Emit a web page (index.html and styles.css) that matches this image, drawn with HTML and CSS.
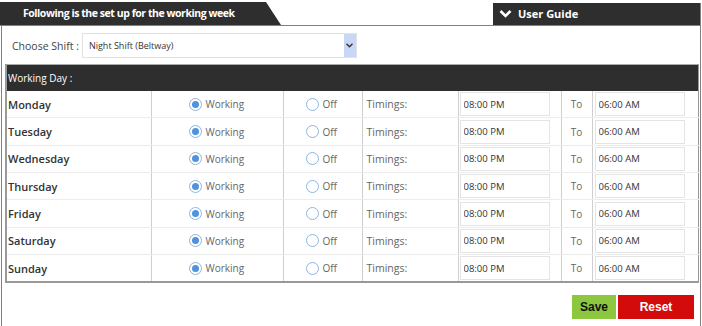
FILE: index.html
```html
<!DOCTYPE html>
<html lang="en">
<head>
    <meta charset="UTF-8">
    <meta name="viewport" content="width=device-width, initial-scale=1.0">
    <title>Working Week</title>
    <link rel="stylesheet" href="styles.css">
</head>
<body>

    <div class="tabs">
        <div class="tab-main">Following is the set up for the working week</div>
        <div class="tab-guide">
            <svg class="chevron" width="13" height="10" viewBox="0 0 13 10"><path d="M1.5 2 L6.5 7 L11.5 2" fill="none" stroke="#fff" stroke-width="2.6"/></svg>
            User Guide
        </div>
    </div>

    <div class="panel">
        <div class="shift-row">
            <label class="shift-label" for="shift">Choose Shift :</label>
            <div class="select-box">
                <span class="select-text">Night Shift (Beltway)</span>
                <span class="select-arrow">
                    <svg width="7" height="5" viewBox="0 0 7 5"><path d="M0.5 0.8 L3.5 3.8 L6.5 0.8" fill="none" stroke="#333" stroke-width="1.4"/></svg>
                </span>
            </div>
        </div>

        <table class="week">
            <colgroup>
                <col class="c-day">
                <col class="c-work">
                <col class="c-off">
                <col class="c-label">
                <col class="c-from">
                <col class="c-to">
                <col class="c-until">
            </colgroup>
            <tr class="head">
                <td colspan="7">Working Day :</td>
            </tr>
            <tbody id="days"></tbody>
        </table>

        <div class="actions">
            <button class="btn-save">Save</button>
            <button class="btn-reset">Reset</button>
        </div>
    </div>

    <script>
        const days = ["Monday", "Tuesday", "Wednesday", "Thursday", "Friday", "Saturday", "Sunday"];
        const body = document.getElementById("days");

        days.forEach(function (day) {
            const row = document.createElement("tr");
            row.innerHTML =
                '<td class="day">' + day + '</td>' +
                '<td class="opt-work"><label><input type="radio" name="' + day + '" checked> Working</label></td>' +
                '<td class="opt-off"><label><input type="radio" name="' + day + '"> Off</label></td>' +
                '<td class="label">Timings:</td>' +
                '<td class="time from"><input type="text" value="08:00 PM"></td>' +
                '<td class="to">To</td>' +
                '<td class="time"><input type="text" value="06:00 AM"></td>';
            body.appendChild(row);
        });
    </script>

</body>
</html>
```

FILE: styles.css
```css
body {
    margin: 0;
    font-family: "Open Sans", Arial, sans-serif;
    background: #fff;
    color: #333;
}
.tabs {
    display: flex;
    justify-content: space-between;
    width: 701px;
    height: 23px;
    margin-top: 2px;
    border-bottom: 1px solid #808080;
}
.tab-main {
    width: 281px;
    background: #2e2e2e;
    color: #fff;
    font-weight: 700;
    font-size: 10.5px;
    letter-spacing: -0.45px;
    white-space: nowrap;
    line-height: 23px;
    padding-left: 23px;
    box-sizing: border-box;
    clip-path: polygon(0 0, 266px 0, 281px 100%, 0 100%);
}
.tab-guide {
    width: 208px;
    margin-top: 1px;
    background: #2e2e2e;
    border-right: 1px solid #808080;
    color: #fff;
    font-weight: 700;
    font-size: 11px;
    line-height: 22px;
    padding-left: 6px;
    box-sizing: border-box;
    display: flex;
    align-items: center;
    gap: 6px;
}
.panel {
    width: 700px;
    height: 300px;
    margin-left: 1px;
    border-left: 1px solid #808080;
    border-right: 1px solid #808080;
    padding: 0 3px;
    box-sizing: border-box;
}
.shift-row {
    display: flex;
    align-items: center;
    padding: 7px 0 0 7px;
    height: 25px;
}
.shift-label {
    flex: none;
    font-size: 10.5px;
    color: #444;
    margin-right: 3px;
}
.select-box {
    display: flex;
    align-items: center;
    justify-content: space-between;
    width: 275px;
    height: 25px;
    border: 1px solid #e2e2e2;
    box-sizing: border-box;
    padding-left: 6px;
}
.select-text {
    font-size: 9px;
    color: #333;
}
.select-arrow {
    width: 12px;
    height: 23px;
    background: #c9d7f7;
    display: flex;
    align-items: center;
    justify-content: center;
}
.week {
    width: 692px;
    table-layout: fixed;
    margin-top: 6px;
    border-collapse: collapse;
    border-top: 1px solid #aaa;
    border-left: 2px solid #999;
    border-right: 1px solid #999;
    border-bottom: 2px solid #999;
    font-size: 10px;
    color: #666;
}
.c-day { width: 145px; }
.c-work { width: 132px; }
.c-off { width: 79px; }
.c-label { width: 96px; }
.c-from { width: 103px; }
.c-to { width: 31px; }
.c-until { width: 106px; }
.week td {
    padding: 0;
    height: 26.35px;
    border-bottom: 1px solid #ececec;
    border-left: 1px solid #cfcfcf;
}
.week .head td {
    background: #2e2e2e;
    color: #fff;
    font-size: 10px;
    padding-left: 1px;
    height: 26px;
    border: none;
}
.week tr:last-child td {
    border-bottom: none;
}
.day {
    padding-left: 1px !important;
    font-size: 11px;
    font-weight: 600;
    color: #333;
}
.opt-work {
    padding-left: 37px !important;
}
.opt-off {
    padding-left: 22px !important;
}
.week label {
    display: flex;
    align-items: center;
    gap: 4px;
}
.week input[type="radio"] {
    appearance: none;
    margin: 0;
    width: 13px;
    height: 13px;
    border: 1px solid #8fb4e3;
    border-radius: 50%;
    background: #fff;
    box-sizing: border-box;
    display: grid;
    place-content: center;
}
.week input[type="radio"]:checked::before {
    content: "";
    width: 7px;
    height: 7px;
    border-radius: 50%;
    background: #4f92dd;
}
.label {
    padding-left: 4px !important;
    font-size: 10.5px;
}
.time {
    padding-left: 2px !important;
}
.time.from {
    padding-left: 1px !important;
}
.time input {
    width: 90px;
    height: 24px;
    border: 1px solid #e4e4e4;
    box-sizing: border-box;
    padding: 0 3px;
    font-family: "Open Sans", Arial, sans-serif;
    font-size: 9.5px;
    color: #333;
    display: block;
}
.to {
    text-align: center;
}
.actions {
    display: flex;
    justify-content: flex-end;
    gap: 2px;
    margin-top: 12px;
    padding-right: 3px;
}
.actions button {
    height: 24px;
    border: none;
    font-family: "Liberation Sans", Arial, sans-serif;
    font-size: 12px;
    font-weight: 700;
    cursor: pointer;
}
.btn-save {
    width: 44px;
    background: #8dc63f;
    color: #111;
}
.btn-reset {
    width: 76px;
    background: #d40b0b;
    color: #fff;
}
```
